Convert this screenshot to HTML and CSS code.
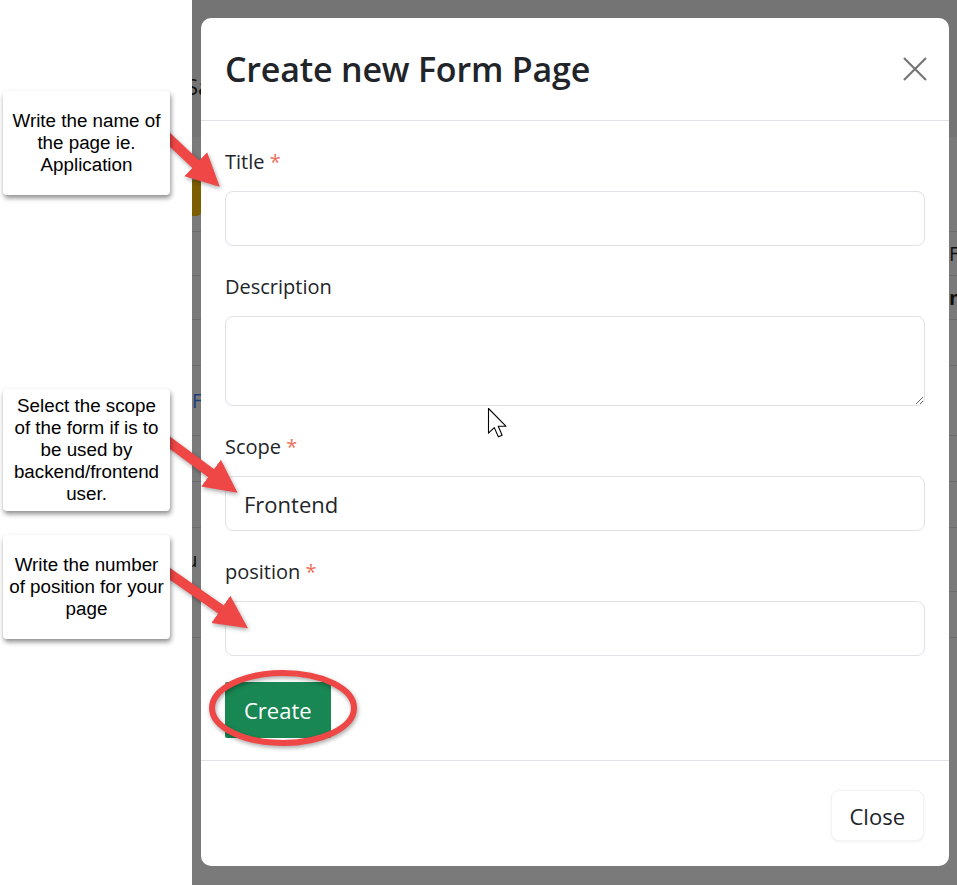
FILE: index.html
```html
<!DOCTYPE html>
<html lang="en">
<head>
    <meta charset="UTF-8">
    <meta name="viewport" content="width=device-width, initial-scale=1.0">
    <title>Create new Form Page</title>
    <link rel="stylesheet" href="styles.css">
</head>
<body>
    <div class="page">
        <aside class="notes">
            <div class="note">Write the name of<br>the page ie.<br>Application</div>
            <div class="note note-scope">Select the scope<br>of the form if is to<br>be used by<br>backend/frontend<br>user.</div>
            <div class="note note-position">Write the number<br>of position for your<br>page</div>
        </aside>

        <main class="shot">
            <!-- page behind the dimmed backdrop -->
            <div class="bg-page" aria-hidden="true">
                <div class="bg-head"><span class="bg-title">Sa</span></div>
                <div class="bg-row bg-row-badge"><span class="bg-badge"></span></div>
                <div class="bg-row bg-row-cols">
                    <span class="bg-right">Fo</span>
                </div>
                <div class="bg-row bg-row-bold">
                    <span class="bg-right bg-strong">nl</span>
                </div>
                <div class="bg-row"></div>
                <div class="bg-row bg-row-link"><span class="bg-link">F</span></div>
                <div class="bg-row"></div>
                <div class="bg-row"></div>
                <div class="bg-row bg-row-user"><span class="bg-text">Ju</span></div>
                <div class="bg-row"></div>
            </div>

            <div class="modal">
                <div class="modal-header">
                    <h1 class="modal-title">Create new Form Page</h1>
                    <button class="btn-close" aria-label="Close">
                        <svg width="24" height="24" viewBox="0 0 24 24">
                            <path d="M1 1 L23 23 M23 1 L1 23" stroke="#757575" stroke-width="2.2" fill="none"/>
                        </svg>
                    </button>
                </div>

                <div class="modal-body">
                    <div class="field">
                        <label class="form-label">Title <span class="req">*</span></label>
                        <input class="form-control" type="text">
                    </div>
                    <div class="field">
                        <label class="form-label">Description</label>
                        <textarea class="form-control form-textarea"></textarea>
                    </div>
                    <div class="field">
                        <label class="form-label">Scope <span class="req">*</span></label>
                        <input class="form-control" type="text" value="Frontend">
                    </div>
                    <div class="field">
                        <label class="form-label">position <span class="req">*</span></label>
                        <input class="form-control" type="text">
                    </div>
                    <button class="btn-create">Create</button>
                </div>

                <div class="modal-footer">
                    <button class="btn-light">Close</button>
                </div>
            </div>
        </main>

        <!-- annotation marks drawn over the screenshot -->
        <svg class="marks" width="957" height="885" viewBox="0 0 957 885">
            <defs>
                <marker id="head" viewBox="0 0 10 10" refX="3" refY="5" markerWidth="3.3" markerHeight="3.5" orient="auto">
                    <path d="M0 0 L10 5 L0 10 Z" fill="#ef4646"/>
                </marker>
            </defs>
            <g class="arrows" stroke="#ef4646" stroke-width="10" marker-end="url(#head)">
                <line x1="150" y1="121" x2="203" y2="171"/>
                <line x1="150" y1="428" x2="219" y2="479"/>
                <line x1="150" y1="560" x2="229" y2="615"/>
            </g>
            <ellipse class="ring" cx="283" cy="708" rx="71" ry="35" fill="none" stroke="#ef4646" stroke-width="6"/>
            <path class="cursor" transform="translate(488.5 408.5) scale(1.45)"
                  d="M0 0 L0 17 L4 13.2 L6.8 19.5 L9.4 18.4 L6.7 12.2 L12 12.2 Z"
                  fill="#fff" stroke="#000" stroke-width="0.75" stroke-linejoin="round"/>
        </svg>
    </div>
</body>
</html>
```

FILE: styles.css
```css
:root {
    --text: #212529;
    --border: #dee2e6;
    --danger: #f0705c;
    --green: #198754;
    --mark: #ef4646;
    --dim: #7a7a7a;
}

* {
    box-sizing: border-box;
}

body {
    margin: 0;
    background: #fff;
    font-family: "Open Sans", "Noto Sans", sans-serif;
    color: var(--text);
}

.page {
    position: relative;
    display: flex;
    width: 957px;
    height: 885px;
    overflow: hidden;
}

/* callouts on the left */
.notes {
    width: 192px;
    flex: none;
    display: flex;
    flex-direction: column;
    align-items: flex-start;
    padding: 91px 0 0 3px;
}

.note {
    position: relative;
    z-index: 2;
    width: 167px;
    min-height: 104px;
    display: flex;
    align-items: center;
    justify-content: center;
    text-align: center;
    background: #fff;
    border-radius: 4px;
    box-shadow: 1px 3px 5px rgba(0, 0, 0, 0.45);
    font-family: "Liberation Sans", Arial, sans-serif;
    font-size: 18.8px;
    line-height: 22px;
    color: #000;
    white-space: nowrap;
}

.note-scope {
    margin-top: 194px;
    min-height: 122px;
}

.note-position {
    margin-top: 24px;
}

/* the dimmed screenshot */
.shot {
    flex: 1;
    display: grid;
    background: var(--dim);
    overflow: hidden;
}

.shot > * {
    grid-area: 1 / 1;
}

.bg-page {
    display: flex;
    flex-direction: column;
    font-size: 20px;
    color: #101010;
}

.bg-head {
    height: 137px;
    padding-top: 73px;
    background: #747474;
}

.bg-title {
    display: block;
    margin-left: -6px;
    font-size: 22px;
    line-height: 26px;
}

.bg-row {
    height: 46px;
    border-bottom: 1px solid #6c6c6c;
    display: flex;
    align-items: center;
}

.bg-row-badge {
    height: 95px;
    align-items: flex-start;
    padding-top: 43px;
}

.bg-badge {
    width: 22px;
    height: 36px;
    margin-left: -12px;
    border-radius: 6px;
    background: #7c5d00;
}

.bg-row-cols,
.bg-row-bold {
    height: 44px;
}

.bg-right {
    margin-left: 757px;
    white-space: nowrap;
}

.bg-strong {
    font-weight: 700;
}

.bg-row-link {
    height: 70px;
}

.bg-link {
    color: #1b3f7a;
    white-space: nowrap;
}

.bg-row-user {
    height: 64px;
}

.bg-text {
    margin-left: -12px;
}

/* modal */
.modal {
    align-self: start;
    width: 748px;
    height: 848px;
    margin: 18px 0 0 9px;
    background: #fff;
    border-radius: 10px;
    display: flex;
    flex-direction: column;
}

.modal-header {
    height: 103px;
    flex: none;
    display: flex;
    align-items: center;
    justify-content: space-between;
    padding: 0 22px 0 24px;
    border-bottom: 1px solid var(--border);
}

.modal-title {
    margin: 0;
    font-size: 34px;
    font-weight: 600;
    line-height: 1.2;
    letter-spacing: -0.2px;
}

.btn-close {
    border: none;
    background: none;
    padding: 0;
    width: 24px;
    height: 24px;
    cursor: pointer;
}

.btn-close svg {
    display: block;
}

.modal-body {
    padding: 26px 24px 22px;
    border-bottom: 1px solid var(--border);
}

.field {
    margin-bottom: 26px;
}

.form-label {
    display: block;
    margin-bottom: 14px;
    font-size: 20px;
    line-height: 30px;
}

.req {
    color: var(--danger);
}

.form-control {
    display: block;
    width: 100%;
    height: 55px;
    padding: 0 18px;
    border: 1px solid var(--border);
    border-radius: 8px;
    font-family: inherit;
    font-size: 22px;
    color: var(--text);
    background: #fff;
    outline: none;
}

.form-textarea {
    height: 90px;
    resize: vertical;
}

.btn-create {
    display: block;
    height: 56px;
    padding: 0 19px;
    border: none;
    border-radius: 2px;
    background: var(--green);
    color: #fff;
    font-family: inherit;
    font-size: 22px;
    cursor: pointer;
}

.modal-footer {
    display: flex;
    justify-content: flex-end;
    padding: 29px 25px 0;
}

.btn-light {
    height: 51px;
    padding: 0 18px;
    border: 1px solid #f3f3f3;
    border-radius: 8px;
    background: #fff;
    box-shadow: 0 1px 3px rgba(0, 0, 0, 0.06);
    font-family: inherit;
    font-size: 22px;
    color: var(--text);
    cursor: pointer;
}

/* annotation layer */
.marks {
    position: absolute;
    top: 0;
    left: 0;
    z-index: 1;
    pointer-events: none;
}

.arrows,
.ring {
    filter: drop-shadow(1px 2px 2px rgba(0, 0, 0, 0.35));
}
```
